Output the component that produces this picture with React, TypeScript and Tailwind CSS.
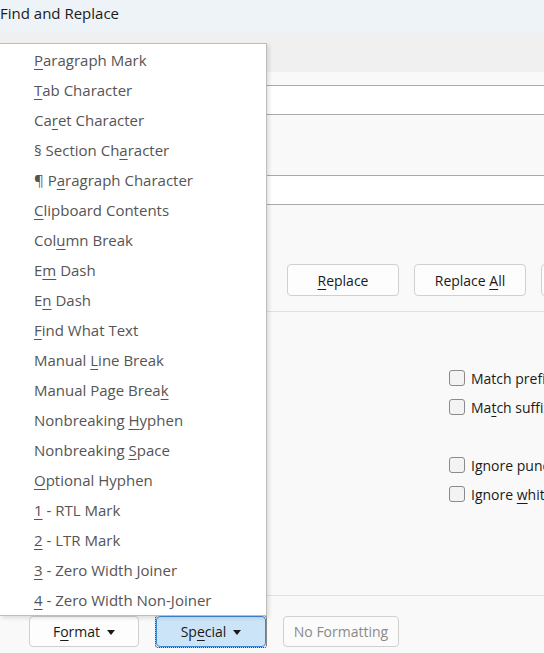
const FONT = "font-['Open_Sans','Noto_Sans',sans-serif]";

type Item = { pre: string; key: string; post: string };

const items: Item[] = [
  { pre: "", key: "P", post: "aragraph Mark" },
  { pre: "", key: "T", post: "ab Character" },
  { pre: "Ca", key: "r", post: "et Character" },
  { pre: "§ Section Ch", key: "a", post: "racter" },
  { pre: "¶ P", key: "a", post: "ragraph Character" },
  { pre: "", key: "C", post: "lipboard Contents" },
  { pre: "Col", key: "u", post: "mn Break" },
  { pre: "E", key: "m", post: " Dash" },
  { pre: "E", key: "n", post: " Dash" },
  { pre: "", key: "F", post: "ind What Text" },
  { pre: "Manual ", key: "L", post: "ine Break" },
  { pre: "Manual Page Brea", key: "k", post: "" },
  { pre: "Nonbreaking ", key: "H", post: "yphen" },
  { pre: "Nonbreaking ", key: "S", post: "pace" },
  { pre: "", key: "O", post: "ptional Hyphen" },
  { pre: "", key: "1", post: " - RTL Mark" },
  { pre: "", key: "2", post: " - LTR Mark" },
  { pre: "", key: "3", post: " - Zero Width Joiner" },
  { pre: "", key: "4", post: " - Zero Width Non-Joiner" },
];

function Key({ pre, k, post }: { pre: string; k: string; post: string }) {
  return (
    <span className="whitespace-pre">
      {pre}
      <u className="underline-offset-[3px]">{k}</u>
      {post}
    </span>
  );
}

function Caret() {
  return (
    <svg width="8" height="5" viewBox="0 0 8 5" className="ml-[7px] mt-[1px] shrink-0">
      <path d="M0 0h8L4 5z" fill="#1a1a1a" />
    </svg>
  );
}

function Check({ pre, k, post }: { pre: string; k: string; post: string }) {
  return (
    <div className="flex h-[20px] items-center gap-[6px] whitespace-nowrap">
      <div className="h-[16px] w-[16px] shrink-0 rounded-[3px] border border-[#8a8a8a] bg-[#f3f3f3]" />
      <span className="text-[14px] text-[#1a1a1a]">
        <Key pre={pre} k={k} post={post} />
      </span>
    </div>
  );
}

export default function App() {
  return (
    <div className={`relative flex h-[653px] w-[544px] flex-col overflow-hidden bg-[#f9f9f9] ${FONT}`}>
      <div className="flex h-[33px] shrink-0 items-center bg-[#eef3f8] pb-[7px] text-[15px] text-[#1a1a1a]">
        Find and Replace
      </div>
      <div className="h-[39px] shrink-0 bg-[#f0f0f0]" />

      <div className="flex flex-1 flex-col">
        <div className="mt-[13px] ml-[120px] h-[30px] border-y border-[#a9a9a9] bg-white" />
        <div className="mt-[60px] ml-[120px] h-[30px] border-y border-[#a9a9a9] bg-white" />

        <div className="mt-[59px] flex gap-[15px] pl-[287px]">
          <button className="flex h-[32px] w-[112px] shrink-0 items-center justify-center rounded-[4px] border border-[#d0d0d0] bg-[#fdfdfd] text-[14px] text-[#1a1a1a]">
            <Key pre="" k="R" post="eplace" />
          </button>
          <button className="flex h-[32px] w-[112px] shrink-0 items-center justify-center rounded-[4px] border border-[#d0d0d0] bg-[#fdfdfd] text-[14px] text-[#1a1a1a]">
            <Key pre="Replace " k="A" post="ll" />
          </button>
          <button className="flex h-[32px] w-[112px] shrink-0 items-center justify-center rounded-[4px] border border-[#d0d0d0] bg-[#fdfdfd] text-[14px] text-[#1a1a1a]">
            <Key pre="" k="F" post="ind Next" />
          </button>
        </div>

        <div className="mt-[15px] ml-[266px] h-px bg-[#e0e0e0]" />

        <div className="mt-[56px] flex flex-col gap-[9px] pl-[449px]">
          <Check pre="Match prefi" k="x" post="" />
          <Check pre="Ma" k="t" post="ch suffix" />
        </div>
        <div className="mt-[38px] flex flex-col gap-[9px] pl-[449px]">
          <Check pre="Ignore punctuation characters" k="" post="" />
          <Check pre="Ignore " k="w" post="hite-space characters" />
        </div>
      </div>

      <div className="h-px shrink-0 bg-[#e0e0e0]" />
      <div className="flex h-[57px] shrink-0 items-start gap-[16px] bg-[#f9f9f9] pt-[20px] pl-[29px]">
        <button className="flex h-[31px] w-[110px] items-center justify-center rounded-[4px] border border-[#d0d0d0] bg-[#fdfdfd] text-[14px] text-[#1a1a1a]">
          <Key pre="F" k="o" post="rmat" />
          <Caret />
        </button>
        <div className="-mt-px rounded-[3px] border border-dotted border-[#1a1a1a]">
          <button className="flex h-[31px] w-[110px] items-center justify-center rounded-[4px] border border-[#3b8ad8] bg-[#cce4f7] text-[14px] text-[#1a1a1a]">
            <Key pre="Sp" k="e" post="cial" />
            <Caret />
          </button>
        </div>
        <button className="flex h-[31px] w-[116px] items-center justify-center rounded-[4px] border border-[#d0d0d0] bg-[#fbfbfb] text-[14px] text-[#8a8a8a]">
          No Formatting
        </button>
      </div>

      <div className="absolute top-[43px] left-0 w-[267px] border-t border-r border-b border-[#bdbdbd] bg-white pt-px shadow-[2px_2px_4px_rgba(0,0,0,0.12)]">
        {items.map((it, i) => (
          <div key={i} className="flex h-[30px] items-center pl-[34px] text-[15px] text-[#555555]">
            <Key pre={it.pre} k={it.key} post={it.post} />
          </div>
        ))}
      </div>
    </div>
  );
}
